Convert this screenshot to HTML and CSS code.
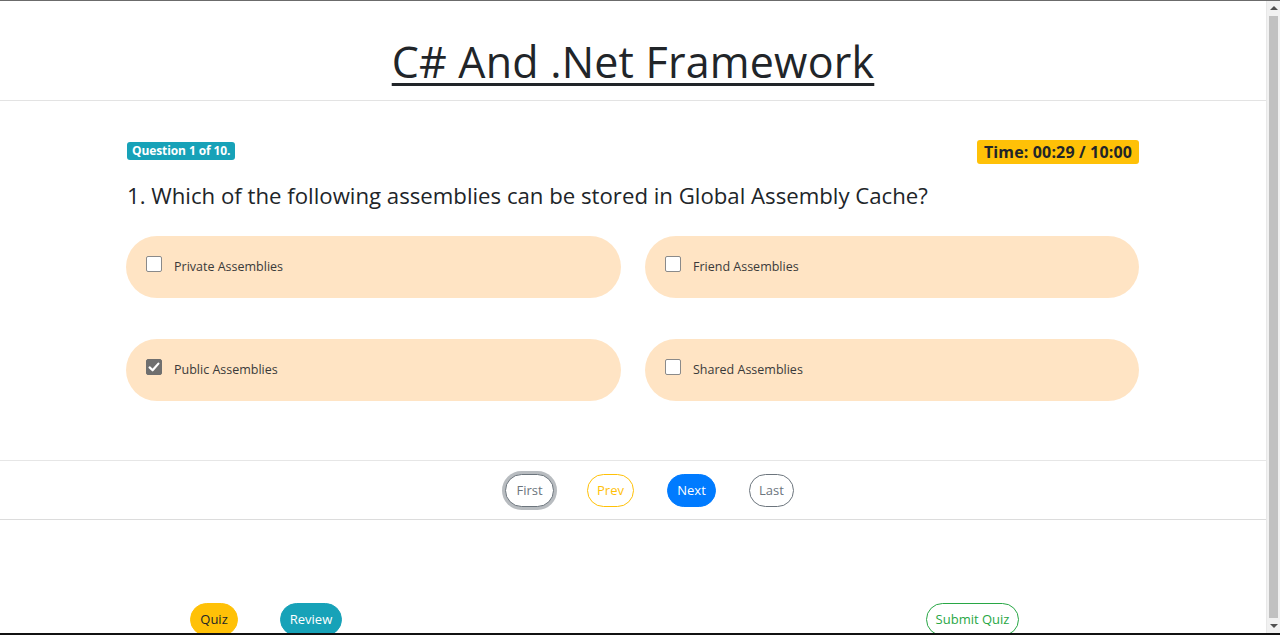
FILE: index.html
```html
<!DOCTYPE html>
<html lang="en">
<head>
<meta charset="utf-8">
<title>C# And .Net Framework</title>
<link rel="stylesheet" href="styles.css">
</head>
<body>
<div class="screen">
  <div class="page">
    <header class="head">
      <h1 class="title">C# And .Net Framework</h1>
    </header>
    <main class="quiz">
      <div class="meta">
        <span class="badge badge-info">Question 1 of 10.</span>
        <span class="badge badge-time">Time: 00:29 / 10:00</span>
      </div>
      <h2 class="question">1. Which of the following assemblies can be stored in Global Assembly Cache?</h2>
      <div class="options">
        <label class="option"><span class="box"></span><span class="opt-text">Private Assemblies</span></label>
        <label class="option"><span class="box"></span><span class="opt-text">Friend Assemblies</span></label>
        <label class="option"><span class="box checked"><svg viewBox="0 0 16 16" width="16" height="16"><path d="M3.6 8.4 L6.6 11.3 L12.4 4.6" fill="none" stroke="#fff" stroke-width="2.2" stroke-linecap="round" stroke-linejoin="round"/></svg></span><span class="opt-text">Public Assemblies</span></label>
        <label class="option"><span class="box"></span><span class="opt-text">Shared Assemblies</span></label>
      </div>
    </main>
    <nav class="pager">
      <button class="btn btn-first">First</button>
      <button class="btn btn-prev">Prev</button>
      <button class="btn btn-next">Next</button>
      <button class="btn btn-last">Last</button>
    </nav>
    <footer class="foot">
      <button class="btn btn-quiz">Quiz</button>
      <button class="btn btn-review">Review</button>
      <button class="btn btn-submit">Submit Quiz</button>
    </footer>
  </div>
  <div class="scrollbar">
    <span class="arrow arrow-up"></span>
    <span class="thumb"></span>
    <span class="arrow arrow-down"></span>
  </div>
</div>
</body>
</html>
```
FILE: styles.css
```css
* { box-sizing: border-box; }
html, body { margin: 0; padding: 0; }
body {
  font-family: "Open Sans", "Noto Sans", sans-serif;
  color: #212529;
  background: #fff;
}
.screen {
  display: flex;
  width: 1280px;
  height: 635px;
  border-top: 1px solid #6b6b6b;
  border-bottom: 2px solid #111;
  overflow: hidden;
}
.page {
  flex: 1;
  min-width: 0;
  overflow: hidden;
}
.head {
  height: 100px;
  border-bottom: 1px solid #e3e3e3;
  text-align: center;
  padding-top: 35px;
}
.title {
  margin: 0;
  font-family: "Open Sans", sans-serif;
  font-weight: 400;
  font-size: 43px;
  line-height: 52px;
  color: #212529;
  text-decoration: underline;
  text-decoration-thickness: 3px;
  text-underline-offset: 5px;
  letter-spacing: 0.2px;
}
.quiz {
  width: 1012px;
  margin: 0 auto;
  padding-top: 39px;
}
.meta {
  display: flex;
  justify-content: space-between;
  align-items: flex-start;
  height: 30px;
}
.badge {
  display: inline-block;
  font-weight: 700;
  border-radius: 3px;
  white-space: nowrap;
}
.badge-info {
  margin-top: 2px;
  background: #17a2b8;
  color: #fff;
  font-size: 12px;
  line-height: 18px;
  padding: 0 5px;
  letter-spacing: -0.1px;
}
.badge-time {
  background: #ffc107;
  color: #212529;
  font-size: 16px;
  line-height: 24px;
  padding: 0 7px;
  letter-spacing: 0.15px;
}
.question {
  margin: 10px 0 0;
  font-weight: 400;
  font-size: 22.2px;
  line-height: 32px;
  color: #212529;
}
.options {
  display: grid;
  grid-template-columns: 495px 494px;
  column-gap: 24px;
  row-gap: 41px;
  margin-top: 24px;
  margin-left: -1px;
}
.option {
  display: flex;
  align-items: center;
  height: 62px;
  background: #ffe4c4;
  border-radius: 31px;
  padding-left: 20px;
}
.box {
  width: 16px;
  height: 16px;
  border: 1px solid #8a8a8a;
  border-radius: 2px;
  background: #fff;
  margin-top: -7px;
  display: flex;
}
.box.checked {
  background: #6f6f6f;
  border-color: #6f6f6f;
}
.box svg { margin: -1px; }
.opt-text {
  margin-left: 12px;
  font-size: 12.5px;
  color: #3a3a3a;
  margin-top: -1px;
}
.pager {
  margin-top: 59px;
  border-top: 1px solid #e6e6e6;
  border-bottom: 1px solid #dcdcdc;
  height: 60px;
  display: flex;
  justify-content: center;
  align-items: flex-start;
  padding-top: 13px;
  gap: 33px;
  padding-left: 33px;
}
.btn {
  font-family: "Open Sans", sans-serif;
  font-size: 13px;
  height: 33px;
  border-radius: 17px;
  background: #fff;
  padding: 0 12px;
  cursor: pointer;
  line-height: 1;
}
.btn-first {
  color: #6c757d;
  border: 1px solid #6c757d;
  box-shadow: 0 0 0 3px #b8bcc0;
  width: 49px;
  padding: 0;
}
.btn-prev {
  color: #ffc107;
  border: 1px solid #ffc107;
  width: 47px;
  padding: 0;
}
.btn-next {
  color: #fff;
  background: #007bff;
  border: 1px solid #007bff;
  width: 49px;
  padding: 0;
}
.btn-last {
  color: #6c757d;
  border: 1px solid #6c757d;
  width: 45px;
  padding: 0;
}
.foot {
  display: flex;
  align-items: flex-start;
  padding-top: 83px;
  padding-left: 190px;
  padding-right: 247px;
  gap: 42px;
}
.btn-quiz {
  background: #ffc107;
  border: 1px solid #ffc107;
  color: #212529;
  width: 48px;
  padding: 0;
}
.btn-review {
  background: #17a2b8;
  border: 1px solid #17a2b8;
  color: #fff;
  width: 62px;
  padding: 0;
}
.btn-submit {
  margin-left: auto;
  color: #28a745;
  border: 1px solid #28a745;
  width: 93px;
  padding: 0;
}
.scrollbar {
  width: 14px;
  flex: none;
  background: #f1f1f1;
  display: flex;
  flex-direction: column;
  align-items: center;
  border-left: 1px solid #e8e8e8;
}
.arrow {
  width: 0;
  height: 0;
  border-left: 4px solid transparent;
  border-right: 4px solid transparent;
  margin: 5px 0;
}
.arrow-up { border-bottom: 4px solid #505050; }
.arrow-down { border-top: 4px solid #505050; }
.thumb {
  flex: 1;
  width: 9px;
  background: #c1c1c1;
  margin: 1px 0;
}
```
